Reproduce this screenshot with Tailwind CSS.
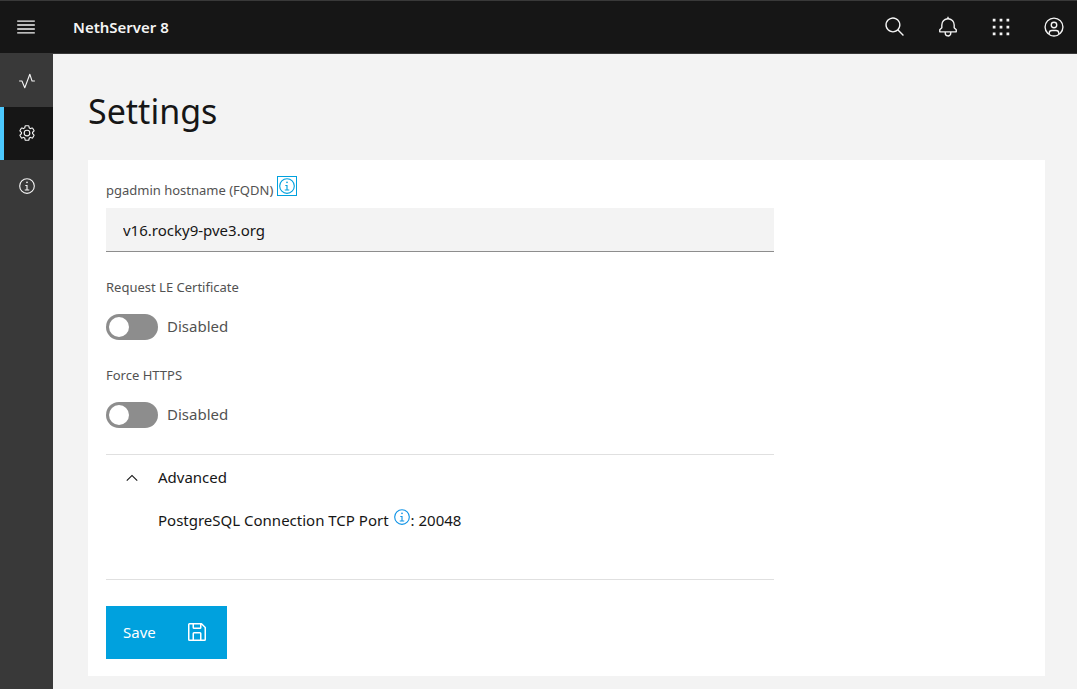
<!DOCTYPE html>
<html lang="en">
<head>
<meta charset="utf-8">
<meta name="viewport" content="width=device-width, initial-scale=1">
<title>NethServer 8 - Settings</title>
<script src="https://cdn.jsdelivr.net/npm/@tailwindcss/browser@4"></script>
</head>
<body class="flex min-h-screen flex-col bg-[#f3f3f3] font-['Noto_Sans',sans-serif] text-[15px] leading-5 text-[#161616]">
<svg class="hidden" aria-hidden="true">
  <symbol id="info" viewBox="0 0 32 32"><path d="M17 22V14H13V16H15V22H12V24H20V22ZM16 8a1.5 1.5 0 1 0 1.5 1.5A1.5 1.5 0 0 0 16 8ZM16 30A14 14 0 1 1 30 16 14 14 0 0 1 16 30ZM16 4A12 12 0 1 0 28 16 12 12 0 0 0 16 4Z"/></symbol>
</svg>

<header class="flex h-[54px] items-center border-y border-[#393939] bg-[#161616] text-[#f4f4f4]">
  <button type="button" aria-label="Open menu" class="flex h-full w-[53px] items-center justify-center pr-0.5">
    <svg class="size-[22px] fill-current" viewBox="0 0 20 20"><path d="M2 14.8h16V16H2zM2 11.2h16v1.2H2zM2 7.6h16v1.2H2zM2 4h16v1.2H2z"/></svg>
  </button>
  <a href="#" class="ml-5 text-[15px] font-semibold">NethServer 8</a>
  <nav class="ml-auto flex h-full gap-[7px]" aria-label="Tools">
    <button type="button" aria-label="Search" class="flex w-[46px] items-center justify-center">
      <svg class="size-[22px] fill-current" viewBox="0 0 32 32"><path d="M29 27.586l-7.552-7.552a11.018 11.018 0 1 0-1.414 1.414L27.586 29ZM4 13a9 9 0 1 1 9 9A9.01 9.01 0 0 1 4 13Z"/></svg>
    </button>
    <button type="button" aria-label="Notifications" class="flex w-[46px] items-center justify-center">
      <svg class="size-[22px] fill-current" viewBox="0 0 32 32"><path d="M28.707 19.293 26 16.586V13a10.014 10.014 0 0 0-9-9.949V1H15V3.051A10.014 10.014 0 0 0 6 13v3.586L3.293 19.293A1 1 0 0 0 3 20v3a1 1 0 0 0 1 1h7v.777a5.152 5.152 0 0 0 4.5 5.199A5.006 5.006 0 0 0 21 25V24h7a1 1 0 0 0 1-1V20A1 1 0 0 0 28.707 19.293ZM19 25a3 3 0 0 1-6 0V24h6Zm8-3H5V20.414L7.707 17.707A1 1 0 0 0 8 17V13a8 8 0 0 1 16 0v4a1 1 0 0 0 .293.707L27 20.414Z"/></svg>
    </button>
    <button type="button" aria-label="Applications" class="flex w-[46px] items-center justify-center">
      <svg class="size-[22px] fill-current" viewBox="0 0 32 32"><path d="M4 4h4v4H4zM14 4h4v4h-4zM24 4h4v4h-4zM4 14h4v4H4zM14 14h4v4h-4zM24 14h4v4h-4zM4 24h4v4H4zM14 24h4v4h-4zM24 24h4v4h-4z"/></svg>
    </button>
    <button type="button" aria-label="Account" class="flex w-[46px] items-center justify-center">
      <svg class="size-[22px] fill-current" viewBox="0 0 32 32"><path d="M16 8a5 5 0 1 0 5 5A5 5 0 0 0 16 8Zm0 8a3 3 0 1 1 3-3A3.003 3.003 0 0 1 16 16Z"/><path d="M16 2A14 14 0 1 0 30 16 14.016 14.016 0 0 0 16 2ZM10 26.377V25a3.003 3.003 0 0 1 3-3h6a3.003 3.003 0 0 1 3 3v1.377a11.899 11.899 0 0 1-12 0Zm13.993-1.451A5.002 5.002 0 0 0 19 20H13a5.002 5.002 0 0 0-4.993 4.926 12 12 0 1 1 15.986 0Z"/></svg>
    </button>
  </nav>
</header>

<div class="flex flex-1">
  <nav class="flex w-[53px] shrink-0 flex-col bg-[#393939] text-[#f4f4f4]" aria-label="Main">
    <a href="#status" aria-label="Status" class="flex h-[53px] items-center justify-center">
      <svg class="size-[18px] fill-current" viewBox="0 0 32 32"><path d="M12 29a1 1 0 0 1-.92-.62L6.33 17H2V15H7a1 1 0 0 1 .92.62L12 25.28 20.06 3.65A1 1 0 0 1 21 3a1 1 0 0 1 .93.68L25.72 15H30v2H25a1 1 0 0 1-.95-.68L21 7 12.94 28.35A1 1 0 0 1 12 29Z"/></svg>
    </a>
    <a href="#settings" aria-label="Settings" aria-current="page" class="flex h-[53px] items-center justify-center border-l-4 border-[#4cc9ff] bg-[#161616] pr-1 pb-0.5">
      <svg class="size-[18px] fill-current" viewBox="0 0 32 32"><path d="M27 16.76c0-.25 0-.5 0-.76s0-.51 0-.77l1.92-1.68A2 2 0 0 0 29.3 11L26.94 7a2 2 0 0 0-1.73-1 2 2 0 0 0-.64.1l-2.43.82a11.35 11.35 0 0 0-1.31-.75l-.51-2.52a2 2 0 0 0-2-1.61H13.64a2 2 0 0 0-2 1.61l-.51 2.52a11.48 11.48 0 0 0-1.32.75L7.43 6.06A2 2 0 0 0 6.79 6 2 2 0 0 0 5.06 7L2.7 11a2 2 0 0 0 .41 2.51L5 15.24c0 .25 0 .5 0 .76s0 .51 0 .77L3.11 18.45A2 2 0 0 0 2.7 21L5.06 25a2 2 0 0 0 1.73 1 2 2 0 0 0 .64-.1l2.43-.82a11.35 11.35 0 0 0 1.31.75l.51 2.52a2 2 0 0 0 2 1.61h4.72a2 2 0 0 0 2-1.61l.51-2.52a11.48 11.48 0 0 0 1.32-.75l2.42.82a2 2 0 0 0 .64.1 2 2 0 0 0 1.73-1L29.3 21a2 2 0 0 0-.41-2.51ZM25.21 24l-3.43-1.16a8.86 8.86 0 0 1-2.71 1.57L18.36 28H13.64l-.71-3.55a9.36 9.36 0 0 1-2.7-1.57L6.79 24 4.43 20l2.72-2.4a8.9 8.9 0 0 1 0-3.13L4.43 12 6.79 8l3.43 1.16a8.86 8.86 0 0 1 2.71-1.57L13.64 4h4.72l.71 3.55a9.36 9.36 0 0 1 2.7 1.57L25.21 8 27.57 12l-2.72 2.4a8.9 8.9 0 0 1 0 3.13L27.57 20Z"/><path d="M16 22a6 6 0 1 1 6-6A5.94 5.94 0 0 1 16 22Zm0-10a3.91 3.91 0 0 0-4 4 3.91 3.91 0 0 0 4 4 3.91 3.91 0 0 0 4-4A3.91 3.91 0 0 0 16 12Z"/></svg>
    </a>
    <a href="#about" aria-label="About" class="flex h-[53px] items-center justify-center pb-0.5">
      <svg class="size-[18px] fill-current"><use href="#info"/></svg>
    </a>
  </nav>

  <main class="flex-1 pt-[35px] pr-8 pb-3 pl-[35px]">
    <h1 class="text-[34px] leading-[44px]">Settings</h1>
    <form class="mt-[27px] bg-white px-[18px] pt-4 pb-[17px]">
      <div class="w-full max-w-[668px]">
        <div class="flex h-8 items-start gap-1">
          <label for="hostname" class="pt-1 text-[13px] text-[#525252]">pgadmin hostname (FQDN)</label>
          <button type="button" aria-label="Hostname help" class="flex size-5 items-center justify-center border border-[#00a1de] text-[#00a1de]">
            <svg class="size-[18px] shrink-0 fill-current"><use href="#info"/></svg>
          </button>
        </div>
        <input id="hostname" type="text" value="v16.rocky9-pve3.org" class="block h-11 w-full border-b border-[#8d8d8d] bg-[#f3f3f3] px-[17px] outline-none">

        <label for="le" class="mt-[25px] block text-[13px] text-[#525252]">Request LE Certificate</label>
        <div class="mt-[17px] flex items-center gap-[9px]">
          <input id="le" type="checkbox" role="switch" class="h-[26px] w-[52px] appearance-none rounded-full bg-[#8d8d8d] p-[3px] before:block before:size-5 before:rounded-full before:bg-white">
          <span class="pb-0.5 text-[#525252]">Disabled</span>
        </div>

        <label for="https" class="mt-[25px] block text-[13px] text-[#525252]">Force HTTPS</label>
        <div class="mt-[17px] flex items-center gap-[9px]">
          <input id="https" type="checkbox" role="switch" class="h-[26px] w-[52px] appearance-none rounded-full bg-[#8d8d8d] p-[3px] before:block before:size-5 before:rounded-full before:bg-white">
          <span class="pb-0.5 text-[#525252]">Disabled</span>
        </div>

        <section class="mt-[26px] border-y border-[#e0e0e0] pb-[49px]">
          <button type="button" aria-expanded="true" aria-controls="advanced" class="flex h-[46px] w-full items-center gap-[17px] pl-[17px] text-left">
            <svg class="size-[18px] fill-current" viewBox="0 0 16 16"><path d="M8 5l5 5-.7.7L8 6.4l-4.3 4.3L3 10z"/></svg>
            <span class="pb-0.5">Advanced</span>
          </button>
          <div id="advanced" class="flex items-start pt-[7px] pl-[52px]">
            <span class="pt-0.5">PostgreSQL Connection TCP Port</span>
            <button type="button" aria-label="Port help" class="ml-1 text-[#0f93e6]">
              <svg class="size-[18px] fill-current"><use href="#info"/></svg>
            </button>
            <span class="pt-0.5">: 20048</span>
          </div>
        </section>

        <button type="submit" class="mt-[26px] flex h-[53px] w-[121px] items-center justify-between bg-[#00a1de] pr-[18px] pb-0.5 pl-[17px] text-white">
          Save
          <svg class="size-6 fill-current" viewBox="0 0 32 32"><path d="M27.71 9.29l-5-5A1 1 0 0 0 22 4H6A2 2 0 0 0 4 6V26a2 2 0 0 0 2 2H26a2 2 0 0 0 2-2V10A1 1 0 0 0 27.71 9.29ZM12 6h8v4H12Zm8 20H12V18h8Zm2 0V18a2 2 0 0 0-2-2H12a2 2 0 0 0-2 2v8H6V6h4v4a2 2 0 0 0 2 2h8a2 2 0 0 0 2-2V6.41l4 4V26Z"/></svg>
        </button>
      </div>
    </form>
  </main>
</div>
</body>
</html>
